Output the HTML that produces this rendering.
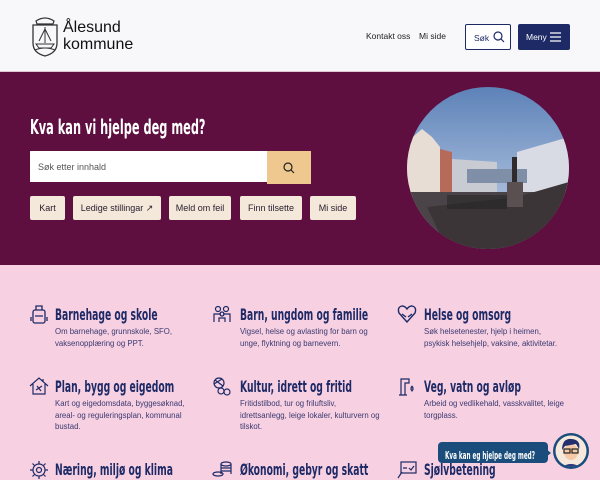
<!DOCTYPE html>
<html><head><meta charset="utf-8"><style>
*{margin:0;padding:0;box-sizing:border-box}
body{width:600px;height:480px;overflow:hidden;font-family:"Liberation Sans",sans-serif;background:#f7d0e2;position:relative}
.hdr{position:absolute;left:0;top:0;width:600px;height:72px;background:#f8f8fa;border-bottom:1px solid #e0c6d4}
.abs{position:absolute}
.hero{position:absolute;left:0;top:72px;width:600px;height:193px;background:#5e0f3f}
.cond{font-family:"DejaVu Sans Condensed","DejaVu Sans",sans-serif;font-weight:bold;display:inline-block;transform-origin:left top}
.chip{position:absolute;top:196px;height:24px;background:#f4e8da;border-radius:2px;font-size:9px;color:#2a2030;display:flex;align-items:center;justify-content:center}
.h{position:absolute;color:#1d2a66;font-size:16px;transform:scaleX(.64);white-space:nowrap}
.d{position:absolute;color:#3a3a70;font-size:7.8px;line-height:11.5px;width:140px}
.ic{position:absolute;width:20px;height:20px}
</style></head><body>
<div class="hdr">
  <svg class="abs" style="left:30px;top:15px" width="30" height="42" viewBox="0 0 30 42">
    <path d="M6 6 Q15 0 24 6 L23 9 L7 9 Z" fill="none" stroke="#333" stroke-width="1.2"/>
    <path d="M3 10 H27 V28 Q27 38 15 41 Q3 38 3 28 Z" fill="none" stroke="#333" stroke-width="1.3"/>
    <path d="M15 12 V28 M9 26 L15 14 L21 26 M6 29 H24 L21 33 H9 Z" fill="none" stroke="#333" stroke-width="1"/>
    <path d="M5 35 Q15 31 25 35" fill="none" stroke="#333"/>
  </svg>
  <div class="abs" style="left:63px;top:19px;font-size:16px;line-height:17px;color:#111">Ålesund<br>kommune</div>
  <div class="abs" style="left:366px;top:31px;font-size:8.5px;color:#222">Kontakt oss</div>
  <div class="abs" style="left:419px;top:31px;font-size:8.5px;color:#222">Mi side</div>
  <div class="abs" style="left:465px;top:24px;width:46px;height:26px;border:1px solid #1d2a66;border-radius:2px;background:#fff;font-size:8.5px;color:#1d2a66;padding:8px 0 0 8px">Søk
    <svg class="abs" style="left:27px;top:6px" width="12" height="12" viewBox="0 0 12 12"><circle cx="5" cy="5" r="4" fill="none" stroke="#1d2a66" stroke-width="1.2"/><path d="M8 8 L11 11" stroke="#1d2a66" stroke-width="1.2"/></svg></div>
  <div class="abs" style="left:518px;top:24px;width:52px;height:26px;background:#1d2a66;border-radius:2px;font-size:8.5px;color:#fff;padding:8px 0 0 8px">Meny
    <svg class="abs" style="left:32px;top:8px" width="11" height="10" viewBox="0 0 11 10"><path d="M0 1H11M0 5H11M0 9H11" stroke="#fff" stroke-width="1.2"/></svg></div>
</div>
<div class="hero"></div>
<div class="abs cond" style="left:30px;top:115px;font-size:20px;color:#fff;transform:scaleX(.63);white-space:nowrap">Kva kan vi hjelpe deg med?</div>
<div class="abs" style="left:30px;top:151px;width:237px;height:31px;background:#fff;font-size:9px;color:#555;padding:11px 0 0 8px">Søk etter innhald</div>
<div class="abs" style="left:267px;top:151px;width:44px;height:33px;background:#efc88f"><svg class="abs" style="left:16px;top:11px" width="12" height="12" viewBox="0 0 12 12"><circle cx="5" cy="5" r="4" fill="none" stroke="#222" stroke-width="1.2"/><path d="M8 8 L11 11" stroke="#222" stroke-width="1.2"/></svg></div>
<div class="chip" style="left:30px;width:35px">Kart</div>
<div class="chip" style="left:73px;width:88px">Ledige stillingar&nbsp;<span style="font-size:9px">↗</span></div>
<div class="chip" style="left:169px;width:62px">Meld om feil</div>
<div class="chip" style="left:240px;width:62px">Finn tilsette</div>
<div class="chip" style="left:310px;width:46px">Mi side</div>
<svg class="abs" style="left:407px;top:87px" width="162" height="162" viewBox="0 0 162 162">
 <defs><clipPath id="c"><circle cx="81" cy="81" r="81"/></clipPath>
 <linearGradient id="s" x1="0" y1="0" x2="0" y2="1"><stop offset="0" stop-color="#5d82b8"/><stop offset=".6" stop-color="#9fb6d8"/><stop offset="1" stop-color="#c8c9d6"/></linearGradient></defs>
 <g clip-path="url(#c)">
  <rect width="162" height="162" fill="url(#s)"/>
  <path d="M0 110 V55 L15 42 L25 50 L33 60 V110 Z" fill="#e8ddd5"/>
  <path d="M33 110 V62 L45 65 V110 Z" fill="#b56a5a"/>
  <path d="M45 110 V72 L90 75 V110 Z" fill="#c9cbd2"/>
  <path d="M110 110 V65 L162 50 V110 Z" fill="#d8dbe4"/>
  <rect x="60" y="82" width="60" height="14" fill="#7f8fa8"/>
  <path d="M0 105 H162 V162 H0 Z" fill="#4a4448"/>
  <path d="M20 120 L110 110 L162 95 V162 H40 Z" fill="#3b3538"/>
  <rect x="105" y="70" width="5" height="30" fill="#2f2a2c"/><rect x="100" y="95" width="16" height="25" fill="#5a5052"/>
  <path d="M40 115 H100" stroke="#222" stroke-width="14" opacity=".5"/>
 </g>
</svg>

<svg class="ic" style="left:29px;top:304px" viewBox="0 0 20 20" fill="none" stroke="#1d2a66" stroke-width="1.3"><rect x="4" y="6" width="12" height="13" rx="2"/><path d="M7 6 V2 H13 V6 M6 12 H14 M2 13 V17 M18 13 V17"/></svg>
<div class="h cond" style="left:55px;top:305px">Barnehage og skole</div>
<div class="d" style="left:55px;top:326px">Om barnehage, grunnskole, SFO, vaksenopplæring og PPT.</div>
<svg class="ic" style="left:212px;top:304px" viewBox="0 0 20 20" fill="none" stroke="#1d2a66" stroke-width="1.2"><circle cx="6" cy="5" r="2.5"/><circle cx="14" cy="5" r="2.5"/><circle cx="10" cy="10" r="2"/><path d="M2 18 V10 H9 M18 18 V10 H11 M7 18 V14 H13 V18"/></svg>
<div class="h cond" style="left:240px;top:305px">Barn, ungdom og familie</div>
<div class="d" style="left:240px;top:326px">Vigsel, helse og avlasting for barn og unge, flyktning og barnevern.</div>
<svg class="ic" style="left:397px;top:304px" viewBox="0 0 20 20" fill="none" stroke="#1d2a66" stroke-width="1.4"><path d="M10 18 L2 9 Q0 3 5 2 Q8 2 10 5 Q12 2 15 2 Q20 3 18 9 Z M5 10 L9 13 M15 10 L11 13"/></svg>
<div class="h cond" style="left:424px;top:305px">Helse og omsorg</div>
<div class="d" style="left:424px;top:326px;width:140px">Søk helsetenester, hjelp i heimen, psykisk helsehjelp, vaksine, aktivitetar.</div>

<svg class="ic" style="left:29px;top:376px" viewBox="0 0 20 20" fill="none" stroke="#1d2a66" stroke-width="1.2"><path d="M1 10 L10 2 L19 10 M4 8 V18 H16 V8 M14 3 V6"/><path d="M7 14 L13 10 M8 10 L12 15"/></svg>
<div class="h cond" style="left:55px;top:377px">Plan, bygg og eigedom</div>
<div class="d" style="left:55px;top:398px">Kart og eigedomsdata, byggesøknad, areal- og reguleringsplan, kommunal bustad.</div>
<svg class="ic" style="left:212px;top:376px" viewBox="0 0 20 20" fill="none" stroke="#1d2a66" stroke-width="1.2"><circle cx="7" cy="7" r="5"/><circle cx="9" cy="15" r="3"/><circle cx="15" cy="16" r="3"/><path d="M3 4 L11 10 M2 8 L10 3"/></svg>
<div class="h cond" style="left:240px;top:377px">Kultur, idrett og fritid</div>
<div class="d" style="left:240px;top:398px">Fritidstilbod, tur og friluftsliv, idrettsanlegg, leige lokaler, kulturvern og tilskot.</div>
<svg class="ic" style="left:397px;top:376px" viewBox="0 0 20 20" fill="none" stroke="#1d2a66" stroke-width="1.2"><path d="M4 19 V3 H12 V7 H8 V19 M2 19 H10"/><path d="M15 10 Q13 13 15 15 Q17 13 15 10"/></svg>
<div class="h cond" style="left:424px;top:377px">Veg, vatn og avløp</div>
<div class="d" style="left:424px;top:398px;width:140px">Arbeid og vedlikehald, vasskvalitet, leige torgplass.</div>

<svg class="ic" style="left:29px;top:460px" viewBox="0 0 20 20" fill="none" stroke="#1d2a66" stroke-width="1.2"><circle cx="10" cy="10" r="6"/><circle cx="10" cy="10" r="2.5"/><path d="M10 1 V4 M10 16 V19 M1 10 H4 M16 10 H19 M3.5 3.5 L5.5 5.5 M14.5 14.5 L16.5 16.5 M3.5 16.5 L5.5 14.5 M14.5 5.5 L16.5 3.5"/></svg>
<div class="h cond" style="left:55px;top:460px">Næring, miljø og klima</div>
<svg class="ic" style="left:212px;top:460px" viewBox="0 0 20 20" fill="none" stroke="#1d2a66" stroke-width="1.2"><ellipse cx="14" cy="4" rx="5" ry="2"/><path d="M9 4 V14 M19 4 V14 M9 8 H19 M9 11 H19"/><ellipse cx="6" cy="14" rx="5" ry="2"/></svg>
<div class="h cond" style="left:240px;top:460px">Økonomi, gebyr og skatt</div>
<svg class="ic" style="left:397px;top:460px" viewBox="0 0 20 20" fill="none" stroke="#1d2a66" stroke-width="1.2"><rect x="4" y="2" width="15" height="11"/><path d="M6 8 H10 M12 8 L14 10 L17 6 M1 18 L5 12"/></svg>
<div class="h cond" style="left:424px;top:460px">Sjølvbetening</div>

<div class="abs" style="left:438px;top:442px;width:110px;height:21px;background:#1a4d7c;border-radius:4px;color:#fff;padding:4px 0 0 7px;overflow:hidden"><span class="cond" style="font-size:10.5px;transform:scaleX(.6);white-space:nowrap">Kva kan eg hjelpe deg med?</span></div>
<div class="abs" style="left:546px;top:449px;width:0;height:0;border-top:4px solid transparent;border-bottom:4px solid transparent;border-left:5px solid #1a4d7c"></div>
<svg class="abs" style="left:552px;top:432px" width="38" height="38" viewBox="0 0 38 38">
 <circle cx="19" cy="19" r="18" fill="#1a4d7c"/><circle cx="19" cy="19" r="15.5" fill="#f6e9dc"/>
 <clipPath id="a"><circle cx="19" cy="19" r="15.5"/></clipPath>
 <g clip-path="url(#a)"><path d="M6 38 Q19 26 32 38 Z" fill="#2a3a7a"/><ellipse cx="19" cy="20" rx="7" ry="8" fill="#f4c9a8"/><path d="M10 18 Q10 6 20 7 Q29 8 27 17 L24 12 L13 14 Z" fill="#24306e"/>
 <rect x="12" y="17" width="6" height="4" fill="none" stroke="#222" stroke-width="1.2"/><rect x="20" y="17" width="6" height="4" fill="none" stroke="#222" stroke-width="1.2"/></g>
</svg>
</body></html>
